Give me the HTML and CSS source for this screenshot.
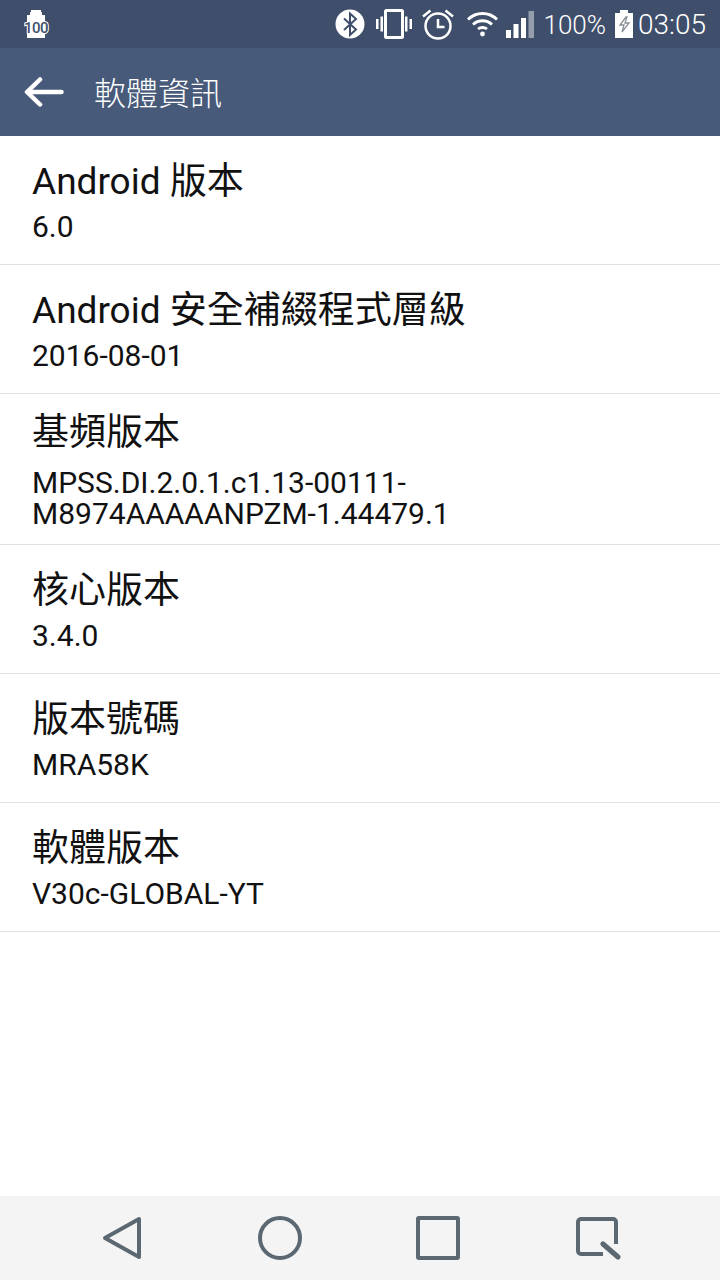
FILE: index.html
```html
<!DOCTYPE html>
<html lang="zh-Hant">
<head>
    <meta charset="UTF-8">
    <meta name="viewport" content="width=device-width, initial-scale=1.0">
    <title>軟體資訊</title>
    <link rel="stylesheet" href="styles.css">
</head>
<body>
    <div class="status-bar">
        <svg class="icon-film" width="24" height="30" viewBox="0 0 24 30">
            <path d="M7 1h10v2h1v3h3v23H3V6h3V3h1z" fill="#fff"/>
            <text x="12" y="24" class="film-text">100</text>
        </svg>
        <div class="status-right">
            <svg width="30" height="30" viewBox="0 0 30 30">
                <circle cx="15" cy="15" r="14.5" fill="#fff"/>
                <path d="M9 9.500l12 11-6 5.500V4.500l6 5.500-12 11" fill="none" stroke="#3f4f6b" stroke-width="2"/>
            </svg>
            <svg class="vib" width="36" height="30" viewBox="0 0 36 30">
                <rect x="9.500" y="1.500" width="17" height="27" rx="1" fill="none" stroke="#fff" stroke-width="3"/>
                <path d="M0 10h2.500v10H0zM4.500 7.500H7v15H4.500zM29 7.500h2.500v15H29zM33.500 10H36v10h-2.500z" fill="#fff"/>
            </svg>
            <svg class="alarm" width="32" height="32" viewBox="0 0 32 32">
                <circle cx="16" cy="18" r="12.500" fill="none" stroke="#fff" stroke-width="2.500"/>
                <path d="M16 11v8h6.500" fill="none" stroke="#fff" stroke-width="2.500"/>
                <path d="M1 8.500L8.500 2.500M31 8.500L23.500 2.500" fill="none" stroke="#fff" stroke-width="2.500"/>
            </svg>
            <svg class="wifi" width="33" height="28" viewBox="0 0 32 28">
                <path d="M1.500 9.500c8-8 21-8 29 0M6.500 14.500c5.500-5 13.500-5 19 0M11.500 19c2.500-2 6.500-2 9 0" fill="none" stroke="#fff" stroke-width="2.800"/>
                <circle cx="16" cy="24" r="2.400" fill="#fff"/>
            </svg>
            <svg class="signal" width="28" height="30" viewBox="0 0 28 30">
                <path d="M0 29v-8h5v8zM7.500 29V15h5v14zM15 29V9h5v20z" fill="#fff"/>
                <path d="M22.500 29V2H28v27z" fill="#fff" opacity=".45"/>
            </svg>
            <span class="percent">100%</span>
            <svg class="battery" width="18" height="28" viewBox="0 0 18 28">
                <path d="M5 0h8v3h5v25H0V3h5z" fill="#fff"/>
                <path d="M11 7L5 15h4l-2 7 7-9h-4l2-6z" fill="none" stroke="#8a8f98" stroke-width="1.300"/>
            </svg>
            <span class="clock">03:05</span>
        </div>
    </div>

    <header class="toolbar">
        <svg class="back-arrow" width="40" height="32" viewBox="0 0 40 32">
            <path d="M37.500 16H4M16 3.500L3 16l13 12.500" fill="none" stroke="#fff" stroke-width="4.500" stroke-linecap="round" stroke-linejoin="round"/>
        </svg>
        <h1>軟體資訊</h1>
    </header>

    <div class="info-list">
        <div class="info-row">
            <div class="info-title">Android 版本</div>
            <div class="info-value">6.0</div>
        </div>
        <div class="info-row">
            <div class="info-title">Android 安全補綴程式層級</div>
            <div class="info-value">2016-08-01</div>
        </div>
        <div class="info-row info-row-tall">
            <div class="info-title">基頻版本</div>
            <div class="info-value">MPSS.DI.2.0.1.c1.13-00111-<br>M8974AAAAANPZM-1.44479.1</div>
        </div>
        <div class="info-row">
            <div class="info-title">核心版本</div>
            <div class="info-value">3.4.0</div>
        </div>
        <div class="info-row">
            <div class="info-title">版本號碼</div>
            <div class="info-value">MRA58K</div>
        </div>
        <div class="info-row">
            <div class="info-title">軟體版本</div>
            <div class="info-value">V30c-GLOBAL-YT</div>
        </div>
    </div>

    <nav class="nav-bar">
        <svg width="42" height="44" viewBox="0 0 42 44">
            <path d="M38 3L4 22l34 19z" fill="none" stroke="#5b6871" stroke-width="4" stroke-linejoin="round"/>
        </svg>
        <svg width="44" height="44" viewBox="0 0 44 44">
            <circle cx="22" cy="22" r="20" fill="none" stroke="#5b6871" stroke-width="4"/>
        </svg>
        <svg width="44" height="44" viewBox="0 0 44 44">
            <rect x="2" y="2" width="40" height="40" rx="1" fill="none" stroke="#5b6871" stroke-width="4"/>
        </svg>
        <svg width="46" height="44" viewBox="0 0 46 44">
            <path d="M28 38H6a3 3 0 0 1-3-3V6a3 3 0 0 1 3-3h32a3 3 0 0 1 3 3v22" fill="none" stroke="#5b6871" stroke-width="4"/>
            <path d="M28 28l15 13" fill="none" stroke="#5b6871" stroke-width="5" stroke-linecap="round"/>
        </svg>
    </nav>
</body>
</html>
```

FILE: styles.css
```css
* {
    box-sizing: border-box;
}
html, body {
    height: 100%;
}
body {
    margin: 0;
    display: flex;
    flex-direction: column;
    background-color: #fff;
    color: #111;
    font-family: "Roboto", "Noto Sans CJK TC", sans-serif;
}
svg {
    display: block;
    flex: none;
}
.status-bar {
    height: 48px;
    flex: none;
    display: flex;
    align-items: center;
    justify-content: space-between;
    padding: 0 14px 0 24px;
    background-color: #3f4f6b;
    color: #fff;
}
.icon-film {
    overflow: visible;
}
.film-text {
    font-size: 15px;
    font-weight: 500;
    fill: #3f4f6b;
    stroke: #fff;
    stroke-width: 2px;
    paint-order: stroke;
    text-anchor: middle;
    letter-spacing: -.5px;
}
.status-right {
    display: flex;
    align-items: center;
}
.vib {
    margin-left: 11px;
}
.alarm {
    margin-left: 10px;
}
.wifi {
    margin-left: 12px;
}
.signal {
    margin-left: 7px;
}
.percent {
    margin: 2px 0 0 9px;
    font-size: 26px;
    font-weight: 300;
}
.battery {
    margin-left: 9px;
}
.clock {
    margin-left: 5px;
    font-size: 28px;
    font-weight: 300;
}
.toolbar {
    height: 88px;
    flex: none;
    display: flex;
    align-items: center;
    padding-left: 24px;
    background-color: #475a7a;
}
.toolbar h1 {
    margin: 0 0 2px 30px;
    font-size: 32px;
    font-weight: 300;
    color: #fff;
}
.info-list {
    flex: 1;
}
.info-row {
    padding: 23px 32px 22px;
    border-bottom: 1px solid #e2e2e2;
}
.info-row-tall {
    padding: 16px 32px 15px;
}
.info-title {
    font-size: 37px;
    line-height: 46px;
}
.info-value {
    margin-top: 7px;
    font-size: 30px;
    line-height: 30px;
}
.info-row-tall .info-value {
    margin-top: 11px;
    line-height: 31px;
}
.nav-bar {
    height: 84px;
    flex: none;
    display: flex;
    align-items: center;
    justify-content: space-between;
    padding: 0 99px 0 101px;
    background-color: #f4f4f4;
}
```
